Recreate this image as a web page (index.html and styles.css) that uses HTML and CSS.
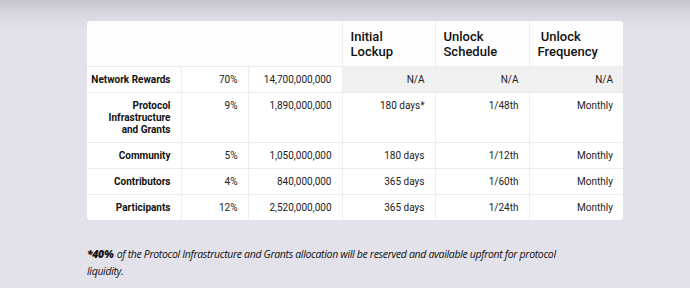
FILE: index.html
```html
<!DOCTYPE html>
<html>
<head>
<meta charset="utf-8">
<link rel="stylesheet" href="styles.css">
</head>
<body>
<div class="page">
  <div class="card">
    <table class="alloc">
      <colgroup>
        <col class="c1"><col class="c2"><col class="c3"><col class="c4"><col class="c5"><col class="c6">
      </colgroup>
      <thead>
        <tr>
          <th></th><th></th><th></th>
          <th>Initial<br>Lockup</th>
          <th>Unlock<br>Schedule</th>
          <th>&nbsp;Unlock<br>Frequency</th>
        </tr>
      </thead>
      <tbody>
        <tr class="shade">
          <td class="name">Network Rewards</td><td>70%</td><td>14,700,000,000</td>
          <td class="g">N/A</td><td class="g">N/A</td><td class="g">N/A</td>
        </tr>
        <tr>
          <td class="name">Protocol Infrastructure and Grants</td><td>9%</td><td>1,890,000,000</td>
          <td>180 days*</td><td>1/48th</td><td>Monthly</td>
        </tr>
        <tr>
          <td class="name">Community</td><td>5%</td><td>1,050,000,000</td>
          <td>180 days</td><td>1/12th</td><td>Monthly</td>
        </tr>
        <tr>
          <td class="name">Contributors</td><td>4%</td><td>840,000,000</td>
          <td>365 days</td><td>1/60th</td><td>Monthly</td>
        </tr>
        <tr>
          <td class="name">Participants</td><td>12%</td><td>2,520,000,000</td>
          <td>365 days</td><td>1/24th</td><td>Monthly</td>
        </tr>
      </tbody>
    </table>
  </div>
  <p class="note"><strong>*40%</strong> of the Protocol Infrastructure and Grants allocation will be reserved and available upfront for protocol liquidity.</p>
</div>
</body>
</html>
```
FILE: styles.css
```css
html, body {
  margin: 0;
  padding: 0;
}
body {
  background: linear-gradient(to bottom, #c5c4cc 0px, #d9d8e1 14px, #e3e2eb 30px, #e3e2eb 100%);
  min-height: 288px;
  font-family: Roboto, "Liberation Sans", sans-serif;
}
.page {
  padding: 21px 0 0 87px;
  width: 536px;
}
.card {
  background: #ffffff;
  border-radius: 4px;
  overflow: hidden;
  width: 536px;
}
.alloc {
  border-collapse: collapse;
  table-layout: fixed;
  width: 536px;
}
.c1 { width: 94px; }
.c2 { width: 67px; }
.c3 { width: 94px; }
.c4 { width: 93px; }
.c5 { width: 94px; }
.c6 { width: 94px; }
.alloc th {
  text-align: left;
  font-size: 13px;
  font-weight: 500;
  line-height: 15px;
  color: #111;
  padding: 8px 8px 7px 8px;
  height: 30px;
  vertical-align: middle;
  border-left: 1px solid #ececec;
  border-bottom: 1px solid #ececec;
  background: #fdfdfd;
}
.alloc th:first-child { border-left: none; }
.alloc th:nth-child(2), .alloc th:nth-child(3) { border-left: none; }
.alloc td {
  font-size: 10px;
  line-height: 12px;
  color: #222;
  text-align: right;
  padding: 7px 10px 6px 6px;
  vertical-align: top;
  border-left: 1px solid #ededed;
  border-top: 1px solid #ededed;
}
.alloc td:first-child { border-left: none; }
.alloc tbody tr:first-child td { border-top: none; }
.alloc td.name {
  font-weight: 700;
  color: #111;
  padding-left: 4px;
}
.alloc td.g {
  background: #f0f0f0;
}
.note {
  margin: 26px 0 0 0;
  width: 480px;
  font-family: "Open Sans", sans-serif;
  font-style: italic;
  font-weight: 500;
  font-size: 10.5px;
  letter-spacing: -0.33px;
  line-height: 17px;
  color: #111;
}
.note strong {
  font-weight: 800;
  padding-right: 1px;
}
```
